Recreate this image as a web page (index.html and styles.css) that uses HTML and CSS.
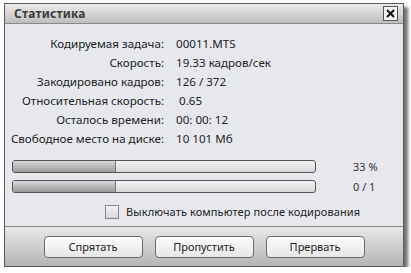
FILE: index.html
```html
<!DOCTYPE html>
<html lang="ru">
<head>
    <meta charset="UTF-8">
    <title>Статистика</title>
    <link rel="stylesheet" href="styles.css">
</head>
<body>
    <div class="window">
        <div class="titlebar">
            <span class="title">Статистика</span>
            <span class="close">
                <svg width="11" height="11" viewBox="0 0 11 11"><path d="M2 2 L9 9 M9 2 L2 9" stroke="#111" stroke-width="2"/></svg>
            </span>
        </div>
        <div class="content">
            <div class="info">
                <div class="label">Кодируемая задача:</div><div class="value">00011.MTS</div>
                <div class="label">Скорость:</div><div class="value">19.33 кадров/сек</div>
                <div class="label">Закодировано кадров:</div><div class="value">126 / 372</div>
                <div class="label">Относительная скорость:</div><div class="value">&nbsp;0.65</div>
                <div class="label">Осталось времени:</div><div class="value">00: 00: 12</div>
                <div class="label">Свободное место на диске:</div><div class="value">10 101 Мб</div>
            </div>
            <div class="progress-row">
                <div class="bar"><div class="fill" style="width: 34%"></div></div>
                <span class="count">33 %</span>
            </div>
            <div class="progress-row">
                <div class="bar"><div class="fill" style="width: 34%"></div></div>
                <span class="count">0 / 1</span>
            </div>
            <label class="check">
                <span class="box"></span>
                Выключать компьютер после кодирования
            </label>
        </div>
        <div class="footer">
            <button class="btn">Спрятать</button>
            <button class="btn">Пропустить</button>
            <button class="btn">Прервать</button>
        </div>
    </div>
</body>
</html>
```

FILE: styles.css
```css
* {
    padding: 0;
    margin: 0;
    box-sizing: border-box;
}
body {
    background: #ffffff;
    font-family: "Noto Sans", "DejaVu Sans", sans-serif;
    font-size: 11px;
    color: #222;
}
.window {
    width: 400px;
    margin: 3px 0 0 4px;
    border: 1px solid #5a5a5a;
    background: #e6e8ee;
    box-shadow: 4px 4px 3px rgba(0, 0, 0, 0.55);
}
.titlebar {
    height: 20px;
    display: flex;
    align-items: center;
    justify-content: space-between;
    padding: 0 5px 0 9px;
    background: linear-gradient(#ececec, #bdbdbd);
    border-bottom: 1px solid #8a8a8a;
}
.title {
    font-weight: bold;
    font-size: 12px;
    letter-spacing: 0.2px;
    color: #3c3c3c;
}
.close {
    width: 15px;
    height: 15px;
    border: 1px solid #555;
    background: #f2f2f2;
    display: flex;
    align-items: center;
    justify-content: center;
}
.content {
    padding: 10px 0 7px 0;
}
.info {
    display: grid;
    grid-template-columns: 159px auto;
    column-gap: 12px;
    grid-auto-rows: 19px;
    align-items: center;
    font-size: 11.6px;
    white-space: nowrap;
}
.label {
    text-align: right;
}
.progress-row {
    display: flex;
    align-items: center;
    margin-top: 5px;
    padding-left: 7px;
}
.info + .progress-row {
    margin-top: 11px;
}
.bar {
    width: 304px;
    height: 13px;
    border: 1px solid #555;
    border-radius: 3px;
    background: linear-gradient(#f4f4f4, #d8d8d8);
    overflow: hidden;
}
.fill {
    height: 100%;
    background: linear-gradient(#d8d8d8, #9a9a9a);
    border-right: 1px solid #777;
}
.count {
    margin-left: 37px;
    color: #333;
}
.check {
    display: flex;
    align-items: center;
    gap: 7px;
    margin: 10px 0 0 100px;
    font-size: 11px;
    letter-spacing: 0.1px;
}
.box {
    width: 14px;
    height: 14px;
    border: 1px solid #888;
    background: linear-gradient(#f4f4f4, #d4d4d4);
}
.footer {
    height: 40px;
    border-top: 1px solid #8a8a8a;
    background: linear-gradient(#e8e8e8, #b4b4b4);
    display: flex;
    align-items: center;
    justify-content: center;
    gap: 12px;
}
.btn {
    width: 99px;
    height: 22px;
    border: 1px solid #6a6a6a;
    border-radius: 4px;
    background: linear-gradient(#fdfdfd, #e6e6e6);
    font-family: "Noto Sans", "DejaVu Sans", sans-serif;
    font-size: 11px;
    color: #222;
}
```
